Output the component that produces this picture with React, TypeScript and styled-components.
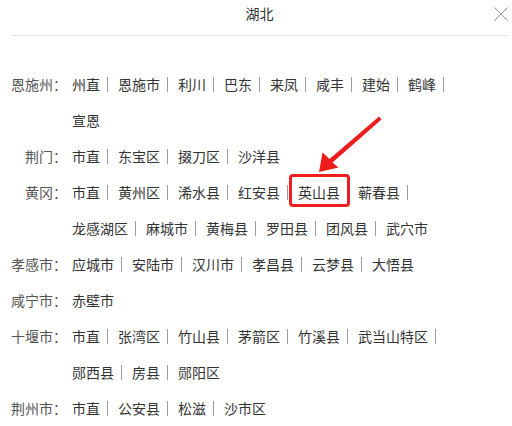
import styled, { createGlobalStyle } from "styled-components";

const GlobalStyle = createGlobalStyle`
  html, body {
    margin: 0;
    padding: 0;
    background: #fff;
  }
  body {
    font-family: "Noto Sans CJK SC", "Noto Sans", sans-serif;
    font-size: 14px;
    color: #333;
  }
`;

type Group = {
  label: string;
  items: string[];
};

const groups: Group[] = [
  {
    label: "恩施州",
    items: ["州直", "恩施市", "利川", "巴东", "来凤", "咸丰", "建始", "鹤峰", "宣恩"],
  },
  { label: "荆门", items: ["市直", "东宝区", "掇刀区", "沙洋县"] },
  {
    label: "黄冈",
    items: [
      "市直",
      "黄州区",
      "浠水县",
      "红安县",
      "英山县",
      "蕲春县",
      "龙感湖区",
      "麻城市",
      "黄梅县",
      "罗田县",
      "团风县",
      "武穴市",
    ],
  },
  {
    label: "孝感市",
    items: ["应城市", "安陆市", "汉川市", "孝昌县", "云梦县", "大悟县"],
  },
  { label: "咸宁市", items: ["赤壁市"] },
  {
    label: "十堰市",
    items: [
      "市直",
      "张湾区",
      "竹山县",
      "茅箭区",
      "竹溪县",
      "武当山特区",
      "郧西县",
      "房县",
      "郧阳区",
    ],
  },
  { label: "荆州市", items: ["市直", "公安县", "松滋", "沙市区"] },
];

const MARKED = "英山县";

const Page = styled.div`
  position: relative;
  width: 512px;
  height: 426px;
  padding: 0 4px 0 11px;
  box-sizing: border-box;
  overflow: hidden;
`;

const Header = styled.div`
  display: grid;
  grid-template-columns: 1fr auto 1fr;
  align-items: start;
  padding-bottom: 9px;
  border-bottom: 1px solid #e6e6e6;
`;

const Title = styled.div`
  grid-column: 2;
  line-height: 26px;
  font-size: 14px;
  color: #333;
`;

const Close = styled.button`
  grid-column: 3;
  justify-self: end;
  margin-top: 7px;
  padding: 0;
  border: 0;
  background: none;
  width: 14px;
  height: 14px;
  display: flex;
  cursor: pointer;
`;

const Body = styled.div`
  padding: 30px 40px 0 0;
`;

const Row = styled.div`
  display: flex;
  align-items: flex-start;
`;

const Label = styled.div`
  flex: 0 0 56px;
  text-align: right;
  line-height: 36px;
  color: #555;
  white-space: nowrap;
`;

const Items = styled.div`
  flex: 1;
  display: flex;
  flex-wrap: wrap;
  margin-left: 5px;
`;

const Item = styled.span<{ $marked?: boolean }>`
  position: relative;
  display: inline-flex;
  align-items: center;
  height: 36px;
  color: #333;
  white-space: nowrap;
  cursor: pointer;

  ${({ $marked }) =>
    $marked &&
    `
    &::after {
      content: "";
      position: absolute;
      top: 0;
      left: -9px;
      width: 61px;
      height: 33px;
      border: 3px solid #ee1d1d;
      border-radius: 4px;
      box-sizing: border-box;
      pointer-events: none;
    }
  `}
`;

const Sep = styled.i`
  display: block;
  width: 1px;
  height: 15px;
  margin: 1px 10px 0 7px;
  background: #9a9a9a;
`;

const Arrow = styled.svg`
  position: absolute;
  left: 0;
  top: 0;
  pointer-events: none;
`;

export default function App() {
  return (
    <Page>
      <GlobalStyle />
      <Header>
        <Title>湖北</Title>
        <Close aria-label="关闭">
          <svg width="14" height="14" viewBox="0 0 14 14">
            <path d="M0.5 0.5 L13.5 13.5 M13.5 0.5 L0.5 13.5" stroke="#999" strokeWidth="1" fill="none" />
          </svg>
        </Close>
      </Header>
      <Body>
        {groups.map((g) => (
          <Row key={g.label}>
            <Label>{g.label}：</Label>
            <Items>
              {g.items.map((name, i) => (
                <Item key={name} $marked={g.label === "黄冈" && name === MARKED}>
                  {name}
                  {i < g.items.length - 1 && <Sep />}
                </Item>
              ))}
            </Items>
          </Row>
        ))}
      </Body>
      <Arrow width="512" height="426" viewBox="0 0 512 426">
        <polygon
          points="319,172 322.5,152.5 329.5,159 379,116.5 381.5,119.5 332.5,162.5 338.5,167.5"
          fill="#ee1d1d"
        />
      </Arrow>
    </Page>
  );
}
